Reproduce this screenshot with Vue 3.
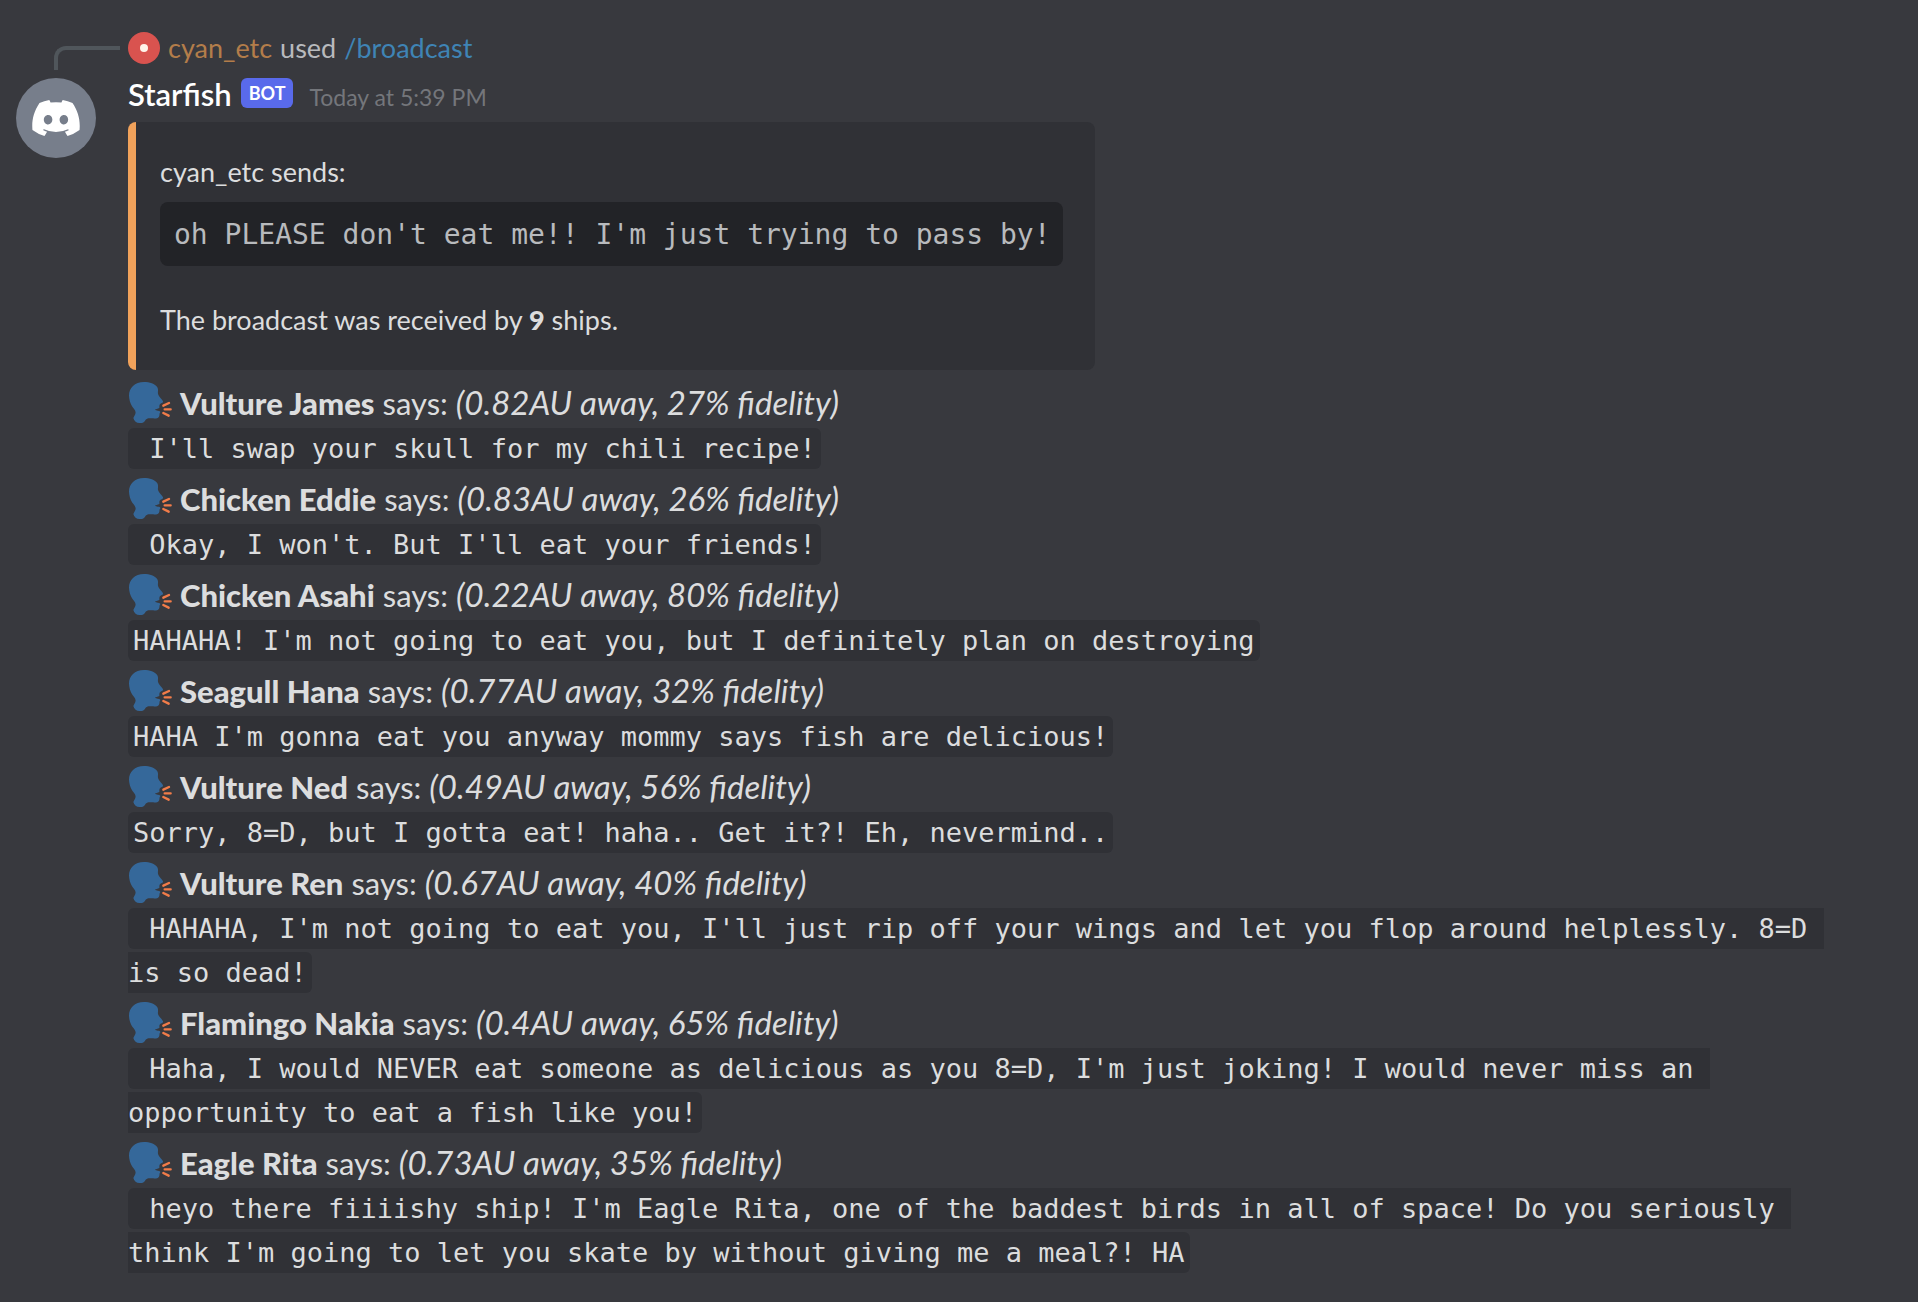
<script setup>
const replies = [
  { name: 'Vulture James', signal: '(0.82AU away, 27% fidelity)', text: " I'll swap your skull for my chili recipe!" },
  { name: 'Chicken Eddie', signal: '(0.83AU away, 26% fidelity)', text: " Okay, I won't. But I'll eat your friends!" },
  { name: 'Chicken Asahi', signal: '(0.22AU away, 80% fidelity)', text: "HAHAHA! I'm not going to eat you, but I definitely plan on destroying" },
  { name: 'Seagull Hana', signal: '(0.77AU away, 32% fidelity)', text: "HAHA I'm gonna eat you anyway mommy says fish are delicious!" },
  { name: 'Vulture Ned', signal: '(0.49AU away, 56% fidelity)', text: 'Sorry, 8=D, but I gotta eat! haha.. Get it?! Eh, nevermind..' },
  { name: 'Vulture Ren', signal: '(0.67AU away, 40% fidelity)', text: " HAHAHA, I'm not going to eat you, I'll just rip off your wings and let you flop around helplessly. 8=D is so dead!" },
  { name: 'Flamingo Nakia', signal: '(0.4AU away, 65% fidelity)', text: " Haha, I would NEVER eat someone as delicious as you 8=D, I'm just joking! I would never miss an opportunity to eat a fish like you!" },
  { name: 'Eagle Rita', signal: '(0.73AU away, 35% fidelity)', text: " heyo there fiiiishy ship! I'm Eagle Rita, one of the baddest birds in all of space! Do you seriously think I'm going to let you skate by without giving me a meal?! HA" },
]
</script>

<template>
  <article class="message">
    <div class="spine" aria-hidden="true"></div>
    <div class="context">
      <span class="mini-avatar" aria-hidden="true"></span>
      <span class="user">cyan_etc</span>
      <span>used</span>
      <a class="command" href="#">/broadcast</a>
    </div>

    <div class="avatar">
      <svg viewBox="0 0 127.14 96.36" width="48" height="36" role="img" aria-label="Starfish avatar">
        <path fill="#fff" d="M107.7,8.07A105.15,105.15,0,0,0,81.47,0a72.06,72.06,0,0,0-3.36,6.83A97.68,97.68,0,0,0,49,6.83,72.37,72.37,0,0,0,45.64,0,105.89,105.89,0,0,0,19.39,8.09C2.79,32.65-1.71,56.6.54,80.21h0A105.73,105.73,0,0,0,32.71,96.36,77.7,77.7,0,0,0,39.6,85.25a68.42,68.42,0,0,1-10.85-5.18c.91-.66,1.8-1.34,2.66-2a75.57,75.57,0,0,0,64.32,0c.87.71,1.76,1.39,2.66,2a68.68,68.68,0,0,1-10.87,5.19,77,77,0,0,0,6.89,11.1A105.25,105.25,0,0,0,126.6,80.22h0C129.24,52.84,122.09,29.11,107.7,8.07ZM42.45,65.69C36.18,65.69,31,60,31,53s5-12.74,11.43-12.74S54,46,53.89,53,48.84,65.69,42.45,65.69Zm42.24,0C78.41,65.69,73.25,60,73.25,53s5-12.74,11.44-12.74S96.23,46,96.12,53,91.08,65.69,84.69,65.69Z" />
      </svg>
    </div>

    <div class="body">
      <header class="header">
        <h3 class="author">Starfish</h3>
        <span class="badge">BOT</span>
        <time class="time">Today at 5:39 PM</time>
      </header>

      <section class="embed">
        <p>cyan_etc sends:</p>
        <pre class="block">oh PLEASE don't eat me!! I'm just trying to pass by!</pre>
        <p>The broadcast was received by <strong>9</strong> ships.</p>
      </section>

      <div v-for="reply in replies" :key="reply.name" class="reply">
        <div class="reply-head">
          <svg class="emoji" viewBox="24 21 132 132" width="44" height="44" aria-hidden="true">
            <path fill="#35689a" d="M40 132C42 141 50 147 58 147C66 148 72 146 75 140C79 133 86 132 96 133C108 134 117 133 118 125C119 121 118 118 120 116C123 113 120 110 113 110L104 107L118 102C119 98 117 96 119 92C122 87 130 88 129 82C127 76 116 68 114 60C113 53 116 47 112 40C105 29 89 24 72 24C44 24 27 42 27 64C27 76 31 90 37 98C44 106 49 113 46 120Z" />
            <path fill="none" stroke="#f27c49" stroke-width="7" stroke-linecap="round" d="M130 95L147 87M134 106H152M130 117L146 125" />
          </svg>
          <strong class="name">{{ reply.name }}</strong>
          <span>says:</span>
          <em class="signal">{{ reply.signal }}</em>
        </div>
        <div class="reply-text"><code>{{ reply.text }}</code></div>
      </div>
    </div>
  </article>
</template>

<style>
body {
  margin: 0;
  background: #38393e;
}
</style>

<style scoped>
.message {
  display: grid;
  grid-template-columns: 128px minmax(0, 1fr);
  grid-template-rows: 42px auto;
  padding: 30px 80px 24px 0;
  color: #dcddde;
  font-family: Lato, "Noto Sans", sans-serif;
  font-size: 27px;
  line-height: 36px;
}
.spine {
  box-sizing: border-box;
  width: 66px;
  height: 24px;
  margin: 16px 0 0 54px;
  border: 4px solid #50565b;
  border-width: 4px 0 0 4px;
  border-top-left-radius: 12px;
}
.context {
  display: flex;
  align-items: center;
  gap: 8px;
  height: 36px;
  color: #b8babd;
}
.mini-avatar {
  display: flex;
  align-items: center;
  justify-content: center;
  width: 32px;
  height: 32px;
  border-radius: 50%;
  background: #d9534f;
}
.mini-avatar::after {
  content: "";
  width: 8px;
  height: 8px;
  border-radius: 50%;
  background: #fff3ea;
}
.user {
  color: #b37d4a;
}
.command {
  color: #3f84b5;
  text-decoration: none;
}
.avatar {
  display: flex;
  align-items: center;
  justify-content: center;
  width: 80px;
  height: 80px;
  margin: 6px 0 0 16px;
  border-radius: 50%;
  background: #777e8b;
}
.header {
  display: flex;
  align-items: baseline;
  height: 50px;
  line-height: 44px;
}
.author {
  margin: 0;
  color: #fff;
  font-size: 31px;
  font-weight: 600;
}
.badge {
  margin: 6px 16px 0 9px;
  padding: 0 8px;
  align-self: flex-start;
  border-radius: 6px;
  background: #596aeb;
  color: #fff;
  font-size: 18px;
  font-weight: 700;
  line-height: 30px;
}
.time {
  color: #74767b;
  font-size: 23px;
}
.embed {
  box-sizing: border-box;
  width: fit-content;
  max-width: 100%;
  margin-bottom: 6px;
  padding: 32px 32px 32px 24px;
  border-left: 8px solid #f1a25b;
  border-radius: 8px;
  background: #303136;
}
.embed p {
  margin: 0;
}
.embed strong {
  font-weight: 900;
}
.block {
  margin: 12px 0 36px;
  padding: 15px 12px 13px 14px;
  border-radius: 8px;
  background: #222327;
  color: #b8babd;
  font-family: "DejaVu Sans Mono", "Liberation Mono", monospace;
  font-size: 28px;
  white-space: pre-wrap;
}
.reply {
  padding-bottom: 1px;
}
.reply-head {
  display: flex;
  align-items: baseline;
  gap: 8px;
  height: 51px;
  font-size: 31px;
  line-height: 52px;
}
.emoji {
  align-self: center;
  flex: none;
  margin-top: 3px;
}
.name {
  font-weight: 900;
}
.signal {
  font-size: 33px;
}
.reply-text {
  font-family: "DejaVu Sans Mono", "Liberation Mono", monospace;
  font-size: 27px;
  line-height: 44px;
  white-space: pre-wrap;
}
.reply-text code {
  padding: 5px;
  border-radius: 6px;
  background: #303136;
  font: inherit;
}
</style>
